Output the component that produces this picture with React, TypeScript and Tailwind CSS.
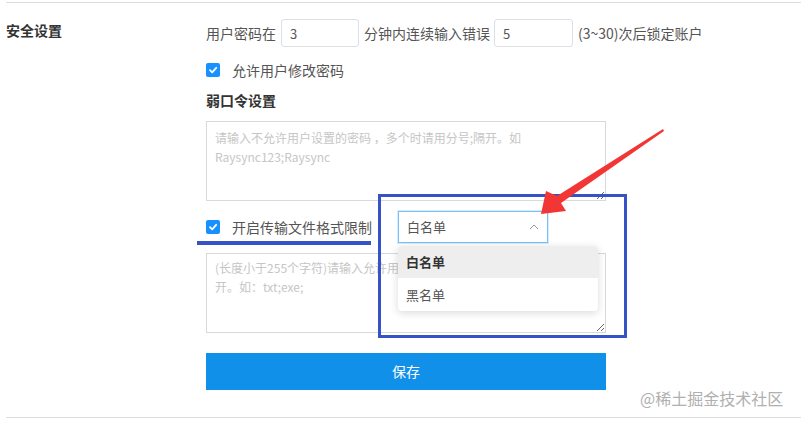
import { useState } from 'react';

const font = { fontFamily: '"Noto Sans CJK SC", "Microsoft YaHei", sans-serif' };

function Checkbox({ checked }: { checked: boolean }) {
  return (
    <span className={`flex h-[14px] w-[14px] flex-none items-center justify-center rounded-[2px] ${checked ? 'bg-[#1890ff]' : 'border border-[#dcdfe6] bg-white'}`}>
      {checked && (
        <svg width="10" height="10" viewBox="0 0 10 10">
          <path d="M2 5.2 L4.2 7.3 L8.2 2.8" fill="none" stroke="white" strokeWidth="1.8" strokeLinecap="round" strokeLinejoin="round" />
        </svg>
      )}
    </span>
  );
}

export default function App() {
  const [minutes, setMinutes] = useState('3');
  const [tries, setTries] = useState('5');
  const [listType] = useState('白名单');

  return (
    <div className="relative h-[421px] w-[801px] overflow-hidden bg-white text-[14px] text-[#555]" style={font}>
      <div className="ml-[6px] mt-[2px] border-t border-[#dedede]" />

      <div className="flex">
        {/* left label column */}
        <div className="w-[206px] flex-none pl-[6px] pt-[17px] font-bold leading-[20px] text-[#333]">安全设置</div>

        {/* form column */}
        <div className="w-[400px] flex-none">
          <div className="mt-[16px] flex h-[28px] w-max items-center whitespace-nowrap">
            <span>用户密码在</span>
            <input value={minutes} onChange={(e) => setMinutes(e.target.value)} className="ml-[5px] h-[28px] w-[78px] rounded-[3px] border border-[#dcdfe6] px-[8px] text-[13px] text-[#555] outline-none" />
            <span className="ml-[5px]">分钟内连续输入错误</span>
            <input value={tries} onChange={(e) => setTries(e.target.value)} className="ml-[4px] h-[28px] w-[79px] rounded-[3px] border border-[#dcdfe6] px-[8px] text-[13px] text-[#555] outline-none" />
            <span className="ml-[5px]">(3~30)次后锁定账户</span>
          </div>

          <div className="mt-[13px] flex h-[20px] items-center">
            <Checkbox checked />
            <span className="ml-[12px]">允许用户修改密码</span>
          </div>

          <div className="mt-[10px] h-[20px] font-bold leading-[20px] text-[#333]">弱口令设置</div>

          <textarea
            className="mt-[11px] block h-[80px] w-[400px] border border-[#d9d9d9] px-[8px] pt-[6px] text-[12px] leading-[19px] outline-none placeholder:text-[#c6c6c6]"
            placeholder={'请输入不允许用户设置的密码 ，多个时请用分号;隔开。如\nRaysync123;Raysync'}
          />

          <div className="mt-[10px] flex h-[32px] items-center">
            <Checkbox checked />
            <span className="ml-[12px] w-[166px] whitespace-nowrap">开启传输文件格式限制</span>
            <div className="flex h-[32px] w-[150px] items-center justify-between border border-[#7cc0f5] px-[8px] text-[13px] text-[#555] shadow-[0_0_0_1px_#d6ebfb]">
              <span>{listType}</span>
              <svg width="10" height="6" viewBox="0 0 10 6">
                <path d="M1 5 L5 1 L9 5" fill="none" stroke="#999" strokeWidth="1" />
              </svg>
            </div>
          </div>

          <textarea
            className="mt-[10px] block h-[80px] w-[400px] border border-[#d9d9d9] px-[8px] pt-[4px] text-[12px] leading-[19px] outline-none placeholder:text-[#c6c6c6]"
            placeholder={'(长度小于255个字符)请输入允许用户传输的文件格式，多个用分号;隔\n开。如：txt;exe;'}
          />

          <button className="mt-[20px] h-[37px] w-[400px] bg-[#1090e9] text-[14px] text-white">保存</button>
        </div>
      </div>

      <div className="ml-[6px] mt-[27px] border-t border-[#dedede]" />

      {/* dropdown menu */}
      <div className="absolute left-[398px] top-[246px] w-[200px] overflow-hidden rounded-[4px] bg-white text-[13px] shadow-[0_2px_8px_rgba(0,0,0,0.15)]">
        <div className="flex h-[32px] items-center bg-[#eeeeee] px-[8px] font-bold text-[#333]">白名单</div>
        <div className="flex h-[33px] items-center px-[8px] text-[#555]">黑名单</div>
      </div>

      {/* annotations */}
      <div className="absolute left-[378px] top-[194px] h-[144px] w-[249px] border-[3px] border-[#3553c6]" />
      <div className="absolute left-[197px] top-[241px] h-[4px] w-[174px] bg-[#3553c6]" />
      <svg className="absolute left-0 top-0" width="801" height="421">
        <polygon points="663,129 557,196 546,191 541,214 566,211 561,203 664,131" fill="#f23535" />
      </svg>

      <div className="absolute left-[640px] top-[386px] text-[16px] text-[#b0b0b0]">@稀土掘金技术社区</div>
    </div>
  );
}
